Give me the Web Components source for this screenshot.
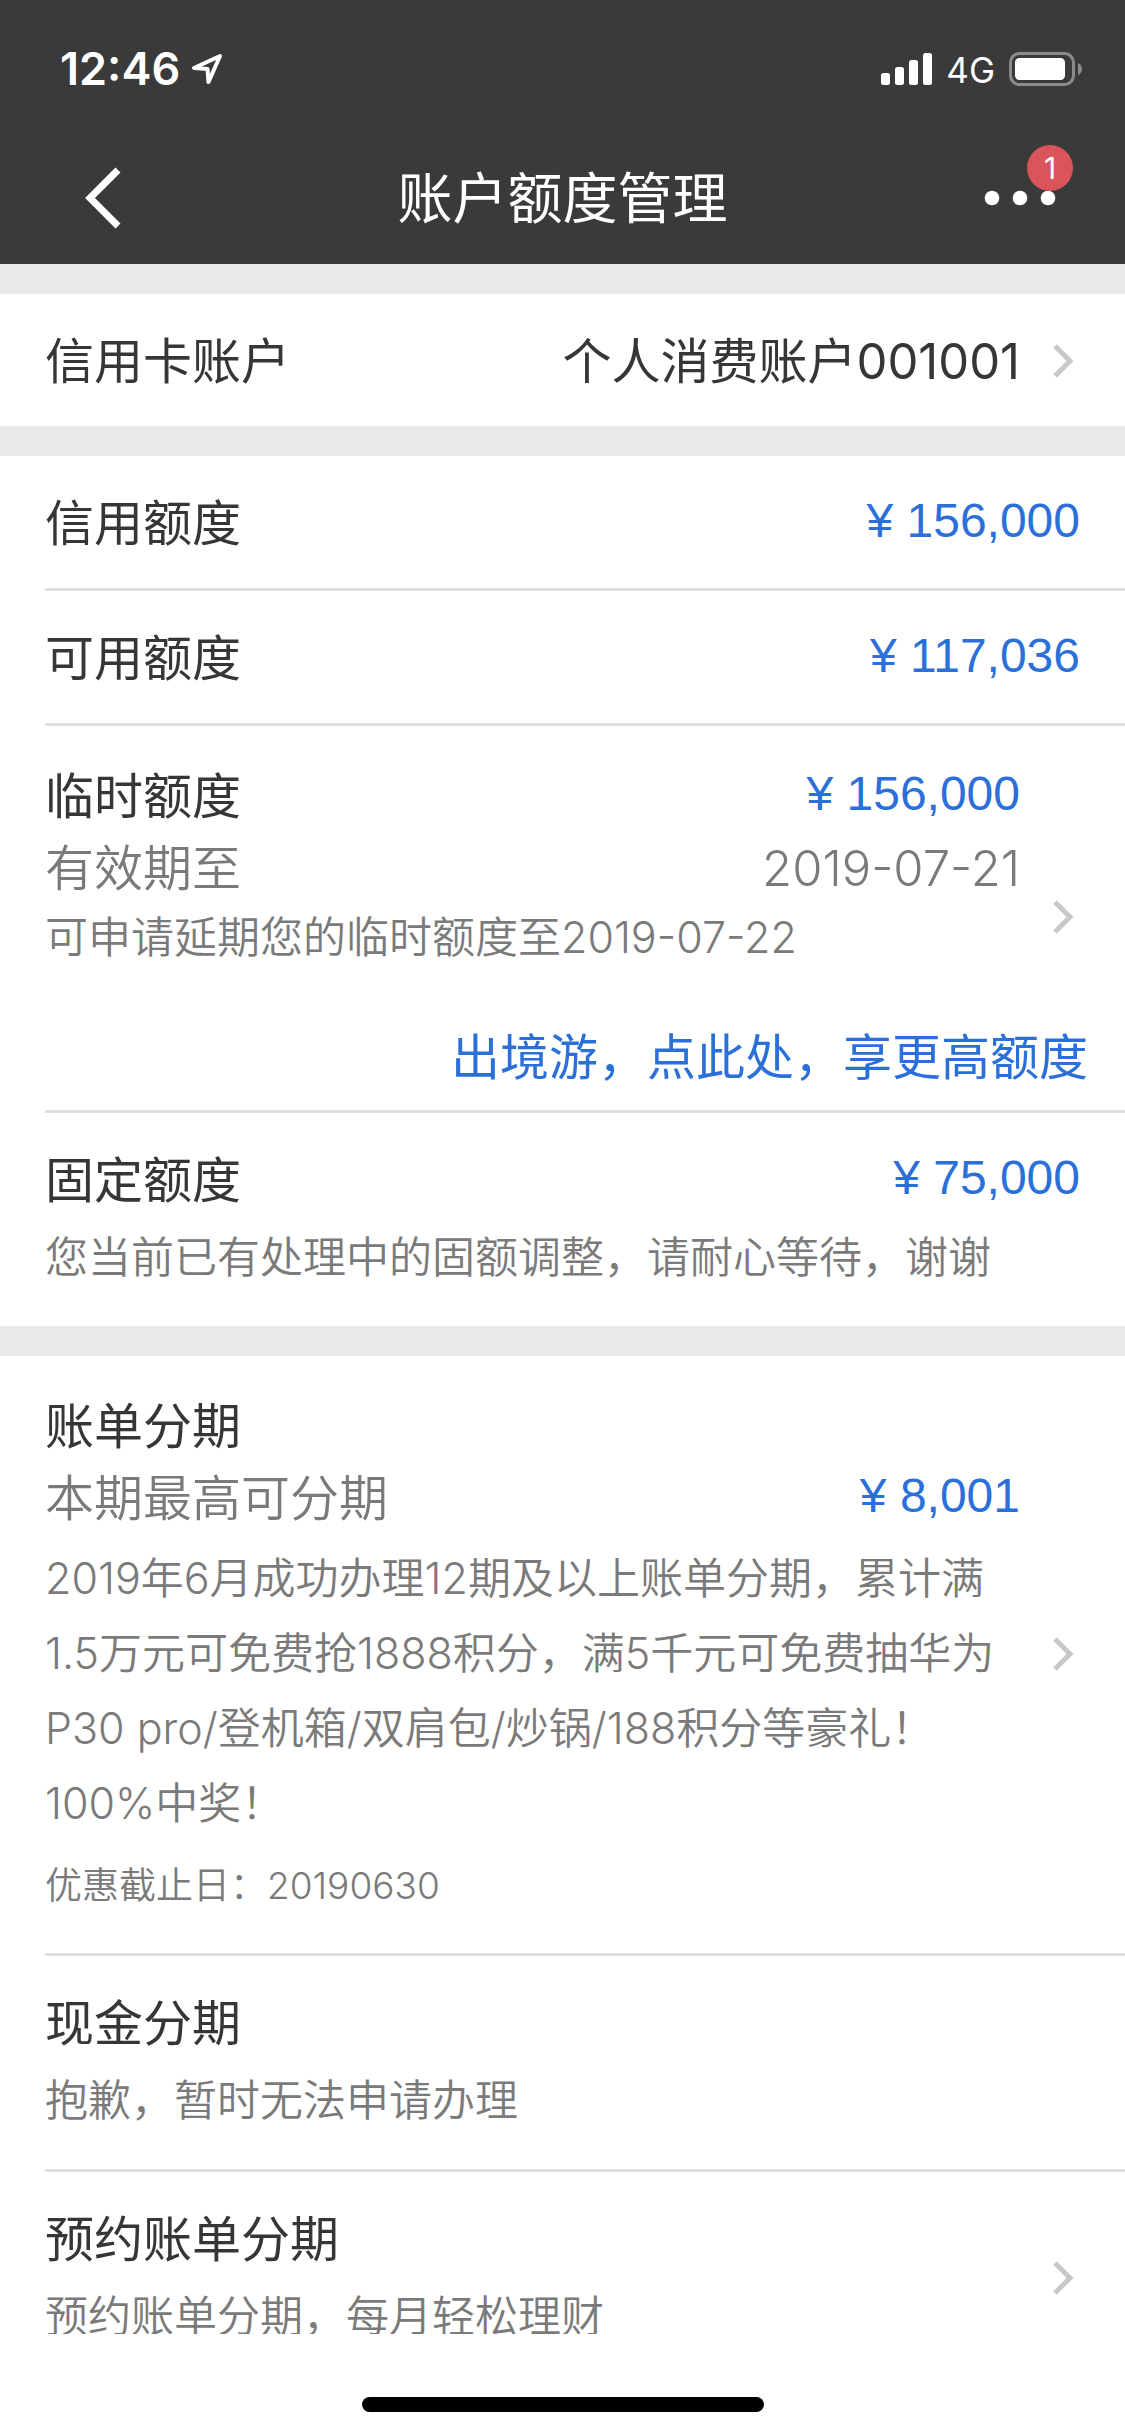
<!DOCTYPE html>
<html lang="zh-CN">
<head>
<meta charset="utf-8">
<meta name="viewport" content="width=device-width, initial-scale=1">
<title>账户额度管理</title>
<style>
  html, body { margin: 0; height: 100%; }
  body {
    font-family: Inter, "Noto Sans CJK SC", sans-serif;
    color: #363636;
    background: #fff;
    --ink: #363636;
    --muted: #7a7a7a;
    --blue: #2b70d9;
    --line: #e0e0e0;
    --gap: #e9e9e9;
    --bar: #3a3a3a;
    --edge: 45px;
    --label: 49px;
    --note: 43px;
    --small: 37px;
  }
</style>
</head>
<body>
<limit-page>
  <status-bar slot="top" time="12:46" network="4G"></status-bar>
  <nav-bar slot="top" badge="1">账户额度管理</nav-bar>

  <card-group>
    <limit-row arrow single>
      <row-line>信用卡账户<span slot="value">个人消费账户001001</span></row-line>
    </limit-row>
  </card-group>

  <card-group>
    <limit-row single>
      <row-line>信用额度<money-value slot="value">156,000</money-value></row-line>
    </limit-row>
    <limit-row single>
      <row-line>可用额度<money-value slot="value">117,036</money-value></row-line>
    </limit-row>
    <limit-row arrow tall>
      <row-line>临时额度<money-value slot="value">156,000</money-value></row-line>
      <row-line muted>有效期至<span slot="value">2019-07-21</span></row-line>
      <row-note kind="tight">可申请延期您的临时额度至2019-07-22</row-note>
      <promo-link slot="footer" href="#travel">出境游，点此处，享更高额度</promo-link>
    </limit-row>
    <limit-row>
      <row-line>固定额度<money-value slot="value">75,000</money-value></row-line>
      <row-note>您当前已有处理中的固额调整，请耐心等待，谢谢</row-note>
    </limit-row>
  </card-group>

  <card-group>
    <limit-row arrow tall>
      <row-line>账单分期</row-line>
      <row-line muted>本期最高可分期<money-value slot="value">8,001</money-value></row-line>
      <row-note kind="text">2019年6月成功办理12期及以上账单分期，累计满1.5万元可免费抢1888积分，满5千元可免费抽华为P30 pro/登机箱/双肩包/炒锅/188积分等豪礼！100%中奖！</row-note>
      <row-note kind="small">优惠截止日：20190630</row-note>
    </limit-row>
    <limit-row>
      <row-line>现金分期</row-line>
      <row-note>抱歉，暂时无法申请办理</row-note>
    </limit-row>
    <limit-row arrow>
      <row-line>预约账单分期</row-line>
      <row-note>预约账单分期，每月轻松理财</row-note>
    </limit-row>
  </card-group>

  <home-indicator slot="bottom"></home-indicator>
</limit-page>

<script>
  const define = (name, html, setup) => {
    const template = document.createElement('template');
    template.innerHTML = html;
    customElements.define(name, class extends HTMLElement {
      constructor() {
        super();
        this.attachShadow({ mode: 'open' }).append(template.content.cloneNode(true));
      }
      connectedCallback() { if (setup) setup(this, this.shadowRoot); }
    });
  };

  define('limit-page', `
    <style>
      :host { display: flex; flex-direction: column; height: 100vh; background: #fff; }
      header { flex: none; background: var(--bar); }
      footer { flex: none; background: #fff; }
      main { flex: 1; min-height: 0; overflow: hidden; }
    </style>
    <header><slot name="top"></slot></header>
    <main><slot></slot></main>
    <footer><slot name="bottom"></slot></footer>`);

  define('status-bar', `
    <style>
      :host { display: flex; align-items: center; justify-content: space-between; height: 132px; padding: 6px 42px 0 60px; color: #fff; box-sizing: border-box; }
      div { display: flex; align-items: center; }
      .time { font-size: 45px; line-height: 56px; font-weight: 600; }
      .left { gap: 11px; }
      .net { font-size: 35px; line-height: 42px; margin: 2px 14px 0 13px; }
      svg { display: block; }
    </style>
    <div class="left">
      <span class="time"></span>
      <svg width="32" height="32" viewBox="0 0 32 32" fill="none" stroke="#fff" stroke-width="4" stroke-linejoin="round"><path d="M29 3 L3 15 L16.500 16 L17.500 29 Z"/></svg>
    </div>
    <div>
      <svg width="52" height="34" viewBox="0 0 52 34" fill="#fff"><rect x="0" y="21" width="9" height="12" rx="2.500"/><rect x="14" y="15" width="9" height="18" rx="2.500"/><rect x="28" y="8" width="9" height="25" rx="2.500"/><rect x="42" y="1" width="9" height="32" rx="2.500"/></svg>
      <span class="net"></span>
      <svg width="74" height="34" viewBox="0 0 74 34"><rect x="1.500" y="1.500" width="63" height="31" rx="9" fill="none" stroke="#8b8b8b" stroke-width="3"/><rect x="6" y="6" width="50" height="22" rx="4.500" fill="#fff"/><path d="M69 11 Q73 13 73 17 Q73 21 69 23 Z" fill="#8b8b8b"/></svg>
    </div>`, (el, root) => {
      root.querySelector('.time').textContent = el.getAttribute('time');
      root.querySelector('.net').textContent = el.getAttribute('network');
    });

  define('nav-bar', `
    <style>
      :host { display: grid; grid-template-columns: 1fr auto 1fr; align-items: center; height: 132px; padding: 0 60px; color: #fff; box-sizing: border-box; }
      h1 { margin: 0; font-size: 55px; line-height: 80px; font-weight: 400; }
      button { border: 0; padding: 0; background: none; color: inherit; font: inherit; display: block; height: 90px; }
      .back { justify-self: start; padding: 0 22px; }
      .more { justify-self: end; position: relative; padding: 0 9px; }
      svg { display: block; }
      .badge { position: absolute; right: -8px; top: -8px; width: 46px; height: 46px; border-radius: 50%; background: #d9555a; font-size: 30px; line-height: 46px; text-align: center; }
    </style>
    <button class="back" aria-label="返回"><svg width="40" height="64" viewBox="0 0 40 64" fill="none" stroke="#fff" stroke-width="7"><path d="M36 4 L8 32 L36 60"/></svg></button>
    <h1><slot></slot></h1>
    <button class="more" aria-label="更多"><svg width="72" height="16" viewBox="0 0 72 16" fill="#fff"><circle cx="8" cy="8" r="7.300"/><circle cx="36" cy="8" r="7.300"/><circle cx="64" cy="8" r="7.300"/></svg><span class="badge"></span></button>`,
    (el, root) => { root.querySelector('.badge').textContent = el.getAttribute('badge'); });

  define('card-group', `
    <style>
      :host { display: block; border-top: 30px solid var(--gap); background: #fff; }
      ::slotted(limit-row:not(:first-child)) { --divider: 3px; }
    </style>
    <slot></slot>`);

  define('limit-row', `
    <style>
      :host { display: block; padding-left: var(--edge); }
      .row { display: grid; grid-template-columns: minmax(0, 1fr) auto; align-items: center; border-top: var(--divider, 0px) solid var(--line); }
      .stack { padding: 32px 0 31px; grid-column: 1; grid-row: 1; }
      .edge { grid-column: 2; grid-row: 1 / span 2; width: var(--edge); }
      .foot { grid-column: 1 / span 2; grid-row: 2; }
      :host([tall]) .stack { padding: 35px 0 31px; }
      :host([single]) .row { padding-top: 4px; }
      :host([single]) .stack { padding: 28px 0; }
      svg { display: none; margin-left: 32px; }
      :host([arrow]) .edge { width: calc(var(--edge) + 60px); }
      :host([arrow]) svg { display: block; }
    </style>
    <div class="row">
      <div class="stack"><slot></slot></div>
      <div class="edge"><svg width="24" height="38" viewBox="0 0 24 38" fill="none" stroke="#c8c8c8" stroke-width="5"><path d="M3 3 L18 18 L3 33"/></svg></div>
      <div class="foot"><slot name="footer"></slot></div>
    </div>`);

  define('row-line', `
    <style>
      :host { display: flex; justify-content: space-between; align-items: center; font-size: var(--label); line-height: 72px; color: var(--ink); white-space: nowrap; }
      :host([muted]) { color: var(--muted); font-weight: 350; }
    </style>
    <span><slot></slot></span><slot name="value"></slot>`);

  define('money-value', `
    <style>
      :host { display: block; font-family: "Liberation Sans", sans-serif; font-size: 48px; line-height: 66px; padding-bottom: 6px; color: var(--blue); }
    </style>
    ¥ <slot></slot>`);

  define('row-note', `
    <style>
      :host { display: block; font-size: var(--note); font-weight: 350; line-height: 75px; color: var(--muted); padding-top: 3px; }
      :host([kind="tight"]) { line-height: 64px; padding-top: 0; }
      :host([kind="text"]) { padding-top: 6px; }
      :host([kind="small"]) { font-size: var(--small); line-height: 72px; padding-top: 9px; }
    </style>
    <slot></slot>`);

  define('promo-link', `
    <style>
      :host { display: flex; justify-content: flex-end; padding: 22px 37px 16px 0; }
      a { font-size: var(--label); line-height: 72px; color: var(--blue); text-decoration: none; }
    </style>
    <a><slot></slot></a>`, (el, root) => { root.querySelector('a').href = el.getAttribute('href'); });

  define('home-indicator', `
    <style>
      :host { display: flex; justify-content: center; align-items: flex-end; height: 102px; padding-bottom: 24px; box-sizing: border-box; }
      i { display: block; width: 402px; height: 15px; border-radius: 8px; background: #000; }
    </style>
    <i></i>`);
</script>
</body>
</html>
